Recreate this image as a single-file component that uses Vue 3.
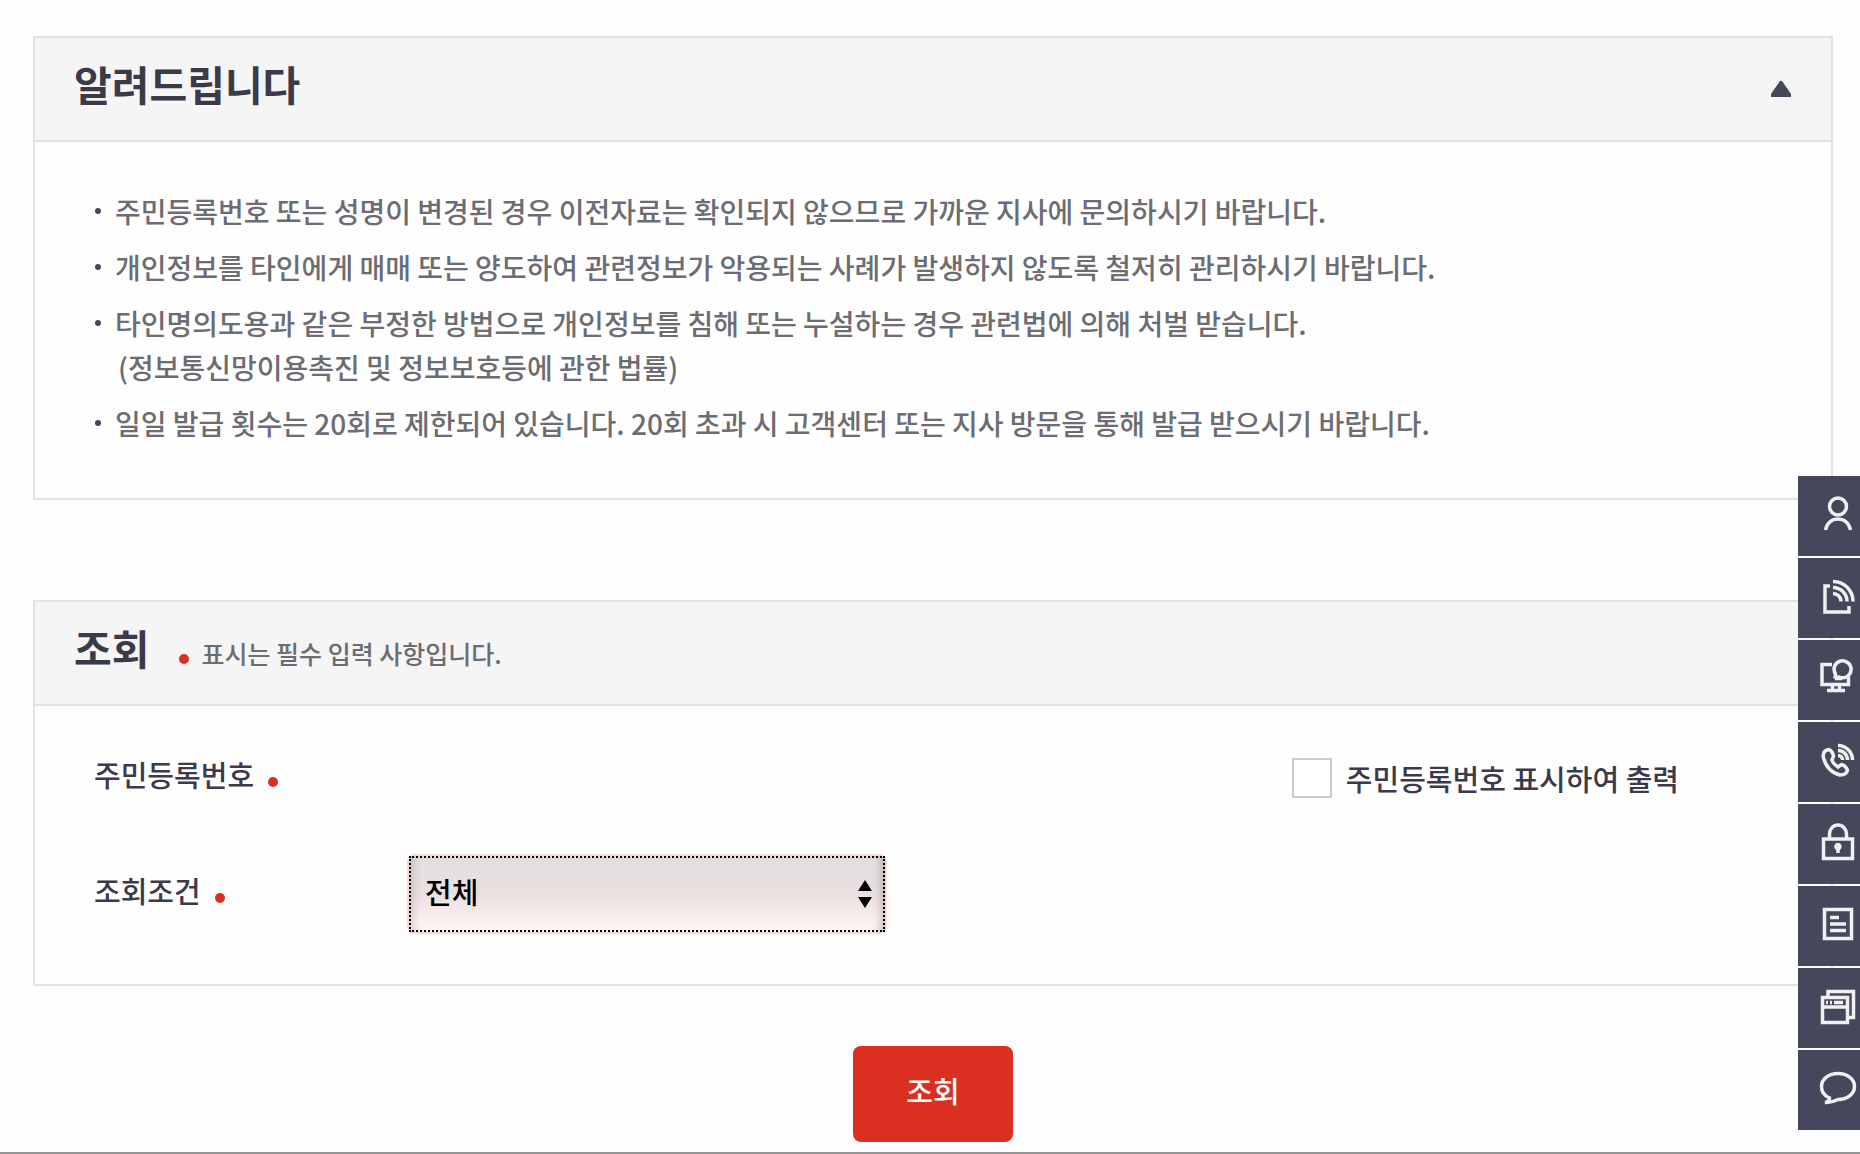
<script setup>
import { ref } from 'vue'

const noticeOpen = ref(true)
const showNumber = ref(false)
const condition = ref('all')

const notices = [
  ['주민등록번호 또는 성명이 변경된 경우 이전자료는 확인되지 않으므로 가까운 지사에 문의하시기 바랍니다.'],
  ['개인정보를 타인에게 매매 또는 양도하여 관련정보가 악용되는 사례가 발생하지 않도록 철저히 관리하시기 바랍니다.'],
  [
    '타인명의도용과 같은 부정한 방법으로 개인정보를 침해 또는 누설하는 경우 관련법에 의해 처벌 받습니다.',
    '(정보통신망이용촉진 및 정보보호등에 관한 법률)'
  ],
  ['일일 발급 횟수는 20회로 제한되어 있습니다. 20회 초과 시 고객센터 또는 지사 방문을 통해 발급 받으시기 바랍니다.']
]

// 퀵메뉴 아이콘 (36 x 36)
const quickMenu = [
  { name: '개인', paths: ['M18 0a8.500 8.500 0 1 1 0 17a8.500 8.500 0 1 1 0-17', 'M5.500 32C7 25 12 21 18 21S29 25 30.500 32'] },
  {
    name: '모바일',
    paths: ['M10 6H5V32H29V26', 'M13 1.500A20 20 0 0 1 33 21.500', 'M13 7.500A14 14 0 0 1 27 21.500', 'M13 13.500A8 8 0 0 1 21 21.500']
  },
  {
    name: '원격지원',
    paths: ['M12 2.500H2V22.500H28.500V15', 'M15 16.500L15.500 12A8.500 8.500 0 1 1 19 15L15 16.500H22', 'M12.500 23V28M19.500 23V28', 'M7 28.500H25']
  },
  {
    name: '전화상담',
    paths: [
      'M9 5.500C4 6 2.500 10 3.500 14C6 23 12 29 20 31C24 31 27 29 27.500 26C26 23 24 21 21.500 20.500L18 23C15 21 12.500 18.500 12 16L13.500 12C13 9 11 6.500 9 5.500Z',
      'M18 1.500A14.500 14.500 0 0 1 32.500 16',
      'M18 6.500A9.500 9.500 0 0 1 27.500 16',
      'M18 11.500A4.500 4.500 0 0 1 22.500 16'
    ]
  },
  { name: '인증센터', paths: ['M3.500 13H32.500V32.500H3.500Z', 'M9.500 12V8A8.500 9 0 0 1 26.500 8V12', 'M18 18.500A2 2 0 1 1 17.900 18.500', 'M18 21V27'] },
  { name: '서식', paths: ['M4.500 1.500H31.500V30.500H4.500Z', 'M10 9.500H19', 'M10 16H26', 'M10 22.500H26'] },
  { name: '사이트', paths: ['M2.500 7.500H27.500V32.500H2.500Z', 'M2.500 17H27.500', 'M6 12.500H8M10 12.500H12M14 12.500H23', 'M8 7V1.500H33.500V27.500H28'] },
  { name: '채팅상담', paths: ['M9.500 26C4 23.500 1.500 19 1.500 14.500C1.500 7 9 1.500 18 1.500S34.500 7 34.500 14.500S27 27.500 18 27.500C14 29.500 10 31 5 30.500C8 30 9.500 28.500 9.500 26Z'] }
]
</script>

<template>
  <div class="page">
    <section class="panel">
      <header class="panel-head">
        <h2 class="title">알려드립니다</h2>
        <button
          class="toggle"
          type="button"
          aria-label="알려드립니다 접기"
          :aria-expanded="noticeOpen"
          @click="noticeOpen = !noticeOpen"
        >
          <svg :class="{ closed: !noticeOpen }" width="20" height="16" viewBox="0 0 20 16">
            <path d="M9 0H11L20 13V16H0V13Z" />
          </svg>
        </button>
      </header>
      <ul v-if="noticeOpen" class="notice">
        <li v-for="(lines, i) in notices" :key="i">
          <p v-for="line in lines" :key="line">{{ line }}</p>
        </li>
      </ul>
    </section>

    <form @submit.prevent>
      <section class="panel search">
        <header class="panel-head">
          <h2 class="title">조회</h2>
          <p class="required-note"><i class="dot"></i>표시는 필수 입력 사항입니다.</p>
        </header>
        <div class="fields">
          <div class="row">
            <span class="label">주민등록번호<i class="dot"></i></span>
            <label class="check" for="showNumber">
              <input id="showNumber" v-model="showNumber" type="checkbox" />
              <span>주민등록번호 표시하여 출력</span>
            </label>
          </div>
          <div class="row">
            <label class="label" for="condition">조회조건<i class="dot"></i></label>
            <div class="select-wrap">
              <select id="condition" v-model="condition">
                <option value="all">전체</option>
              </select>
              <svg class="arrows" width="14" height="28" viewBox="0 0 14 28">
                <path d="M7 0L14 11H0ZM0 17H14L7 28Z" />
              </svg>
            </div>
          </div>
        </div>
      </section>

      <div class="actions">
        <button class="submit" type="submit">조회</button>
      </div>
    </form>

    <nav class="quick" aria-label="퀵메뉴">
      <a v-for="item in quickMenu" :key="item.name" href="#" :aria-label="item.name" @click.prevent>
        <svg width="36" height="36" viewBox="0 0 36 36">
          <path v-for="d in item.paths" :key="d" :d="d" />
        </svg>
      </a>
    </nav>
  </div>
</template>

<style>
body {
  margin: 0;
  background: #fefefe;
}
</style>

<style scoped>
.page {
  padding: 36px 27px 10px 33px;
  border-bottom: 2px solid #979597;
  font-family: "Noto Sans CJK KR", sans-serif;
  font-weight: 500;
  color: #3c3a49;
}

.panel {
  border: 2px solid #e2e1e7;
}
.panel.search {
  margin-top: 100px;
}
.panel-head {
  display: flex;
  align-items: center;
  height: 102px;
  padding: 0 40px 0 39px;
  border-bottom: 2px solid #e2e1e7;
  background: #f5f5f5;
}
.title {
  margin: 0;
  padding-bottom: 12px;
  font-size: 41px;
  line-height: 60px;
  font-weight: 700;
}
.toggle {
  display: flex;
  margin-left: auto;
  padding: 0;
  border: none;
  background: none;
  cursor: pointer;
}
.toggle svg {
  fill: #45475a;
}
.toggle .closed {
  transform: rotate(180deg);
}

.notice {
  margin: 0;
  padding: 47px 60px 53px;
  list-style: none;
  font-size: 28px;
  line-height: 44px;
  color: #6c6c72;
}
.notice li {
  position: relative;
  padding-left: 20px;
}
.notice li + li {
  margin-top: 12px;
}
.notice li::before {
  content: '';
  position: absolute;
  top: 19px;
  left: 0;
  width: 6px;
  height: 6px;
  border-radius: 50%;
  background: #45475a;
}
.notice p {
  margin: 0;
}
.notice p + p {
  padding-left: 3px;
}

.dot {
  display: inline-block;
  width: 10px;
  height: 10px;
  border-radius: 50%;
  background: #db3021;
}
.required-note {
  margin: 0 0 0 30px;
  font-size: 25px;
  line-height: 36px;
  color: #6c6c72;
}
.required-note .dot {
  margin-right: 12px;
}

.fields {
  display: grid;
  gap: 36px;
  padding: 32px 152px 50px 59px;
  font-size: 29px;
  line-height: 44px;
}
.row {
  display: flex;
  align-items: center;
  height: 80px;
}
.label {
  width: 313px;
  padding-bottom: 8px;
}
.label .dot {
  margin-left: 14px;
}
.check {
  display: flex;
  align-items: center;
  gap: 14px;
  margin-left: auto;
  cursor: pointer;
}
.check input {
  appearance: none;
  box-sizing: border-box;
  width: 40px;
  height: 40px;
  margin: 0;
  border: 2px solid #ccc;
  background: #fff;
}
.check input:checked {
  background: #45475a;
}

.select-wrap {
  position: relative;
  width: 480px;
}
/* 포커스 점선 */
.select-wrap::after {
  content: '';
  position: absolute;
  inset: 2px;
  border: 2px dotted #000;
  pointer-events: none;
}
select {
  appearance: none;
  display: block;
  box-sizing: border-box;
  width: 100%;
  height: 80px;
  padding: 0 40px 6px 16px;
  border: 2px solid #fad7d3;
  border-radius: 8px;
  outline: none;
  background: linear-gradient(#e3dfdf, #e8e0e0 40%, #ecdfe0 50%, #fdf2f1 92%, #fbf5f4);
  box-shadow: inset 10px 0 8px -6px rgba(60, 50, 60, 0.2), inset -10px 0 8px -6px rgba(60, 50, 60, 0.25);
  font: inherit;
  color: #000;
}
.arrows {
  position: absolute;
  top: 26px;
  right: 15px;
  pointer-events: none;
}

.actions {
  display: flex;
  justify-content: center;
  margin-top: 60px;
}
.submit {
  width: 160px;
  height: 96px;
  padding: 0 0 8px;
  border: none;
  border-radius: 8px;
  background: #db3021;
  color: #fff;
  font: inherit;
  font-size: 29px;
  cursor: pointer;
}

.quick {
  position: fixed;
  top: 476px;
  right: 0;
  display: grid;
  gap: 2px;
}
.quick a {
  display: block;
  height: 58px;
  padding: 22px 4px 0 22px;
  background: #45475a;
}
.quick svg {
  display: block;
  overflow: visible;
  fill: none;
  stroke: #f0f0f2;
  stroke-width: 3.5;
}
</style>
